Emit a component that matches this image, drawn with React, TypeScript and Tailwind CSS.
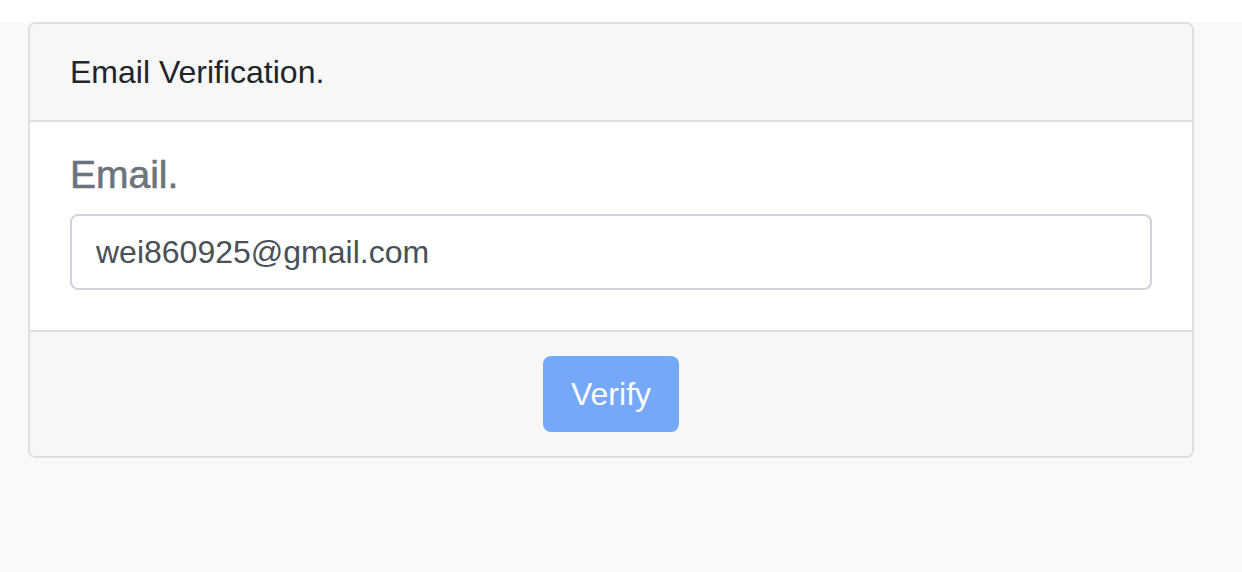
export default function App() {
  return (
    <div className="min-h-[572px] bg-white font-['Liberation_Sans',Arial,sans-serif]">
      <div className="h-[22px] bg-white" />
      <div className="min-h-[550px] bg-[#f8f9fa] pl-[28px]">
        <div className="w-[1166px] overflow-hidden rounded-[8px] border-2 border-[#dfdfdf] bg-white">
          {/* Header */}
          <div className="border-b-2 border-[#dfdfdf] bg-[#f7f7f7] px-[40px] py-[24px] text-[32px] leading-[48px] text-[#212529]">
            Email Verification.
          </div>

          {/* Body */}
          <div className="px-[40px] pb-[40px] pt-[33px]">
            <label className="mb-[20px] block text-[39px] font-medium leading-none text-[#6c757d] [-webkit-text-stroke:0.6px_#6c757d]">
              Email.
            </label>
            <input
              type="email"
              defaultValue="wei860925@gmail.com"
              className="block h-[76px] w-full rounded-[8px] border-2 border-[#ced4da] bg-white px-[24px] py-[12px] text-[32px] leading-[48px] text-[#495057] outline-none"
            />
          </div>

          {/* Footer */}
          <div className="flex justify-center border-t-2 border-[#dfdfdf] bg-[#f7f7f7] py-[24px]">
            <button
              type="button"
              className="h-[76px] w-[136px] rounded-[8px] bg-[#75a8f9] text-[32px] leading-[48px] text-white"
            >
              Verify
            </button>
          </div>
        </div>
      </div>
    </div>
  );
}
